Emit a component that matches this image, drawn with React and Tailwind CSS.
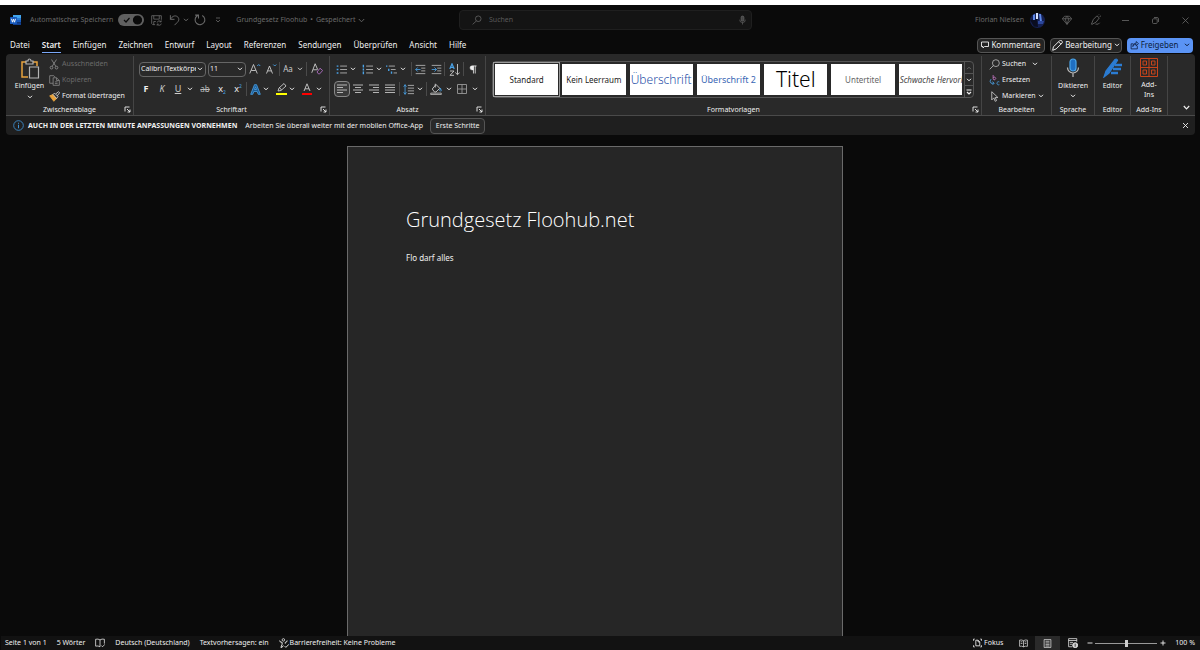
import React from 'react';
import clsx from 'clsx';

const Icon = ({ w = 12, h = 12, box = "0 0 16 16", className = "", children }) => (
    <svg width={w} height={h} viewBox={box} fill="none" stroke="currentColor" strokeWidth="1.2" className={clsx("shrink-0", className)} aria-hidden="true">
        {children}
    </svg>
);

const Chevron = ({ className = "" }) => (
    <Icon w={6} h={4} box="0 0 6 4" className={className}>
        <path d="M1 .8 3 2.8 5 .8" strokeWidth="1" />
    </Icon>
);

const Divider = () => <span className="h-3.5 w-px shrink-0 bg-[#4a4a4a]" />;

const ToolButton = ({ label, className = "w-4", children }) => (
    <button aria-label={label} title={label} className={clsx("flex h-4 shrink-0 items-center justify-center", className)}>
        {children}
    </button>
);

const MenuButton = ({ label, className = "w-2" }) => (
    <ToolButton label={label} className={className}>
        <Chevron />
    </ToolButton>
);

const Group = ({ title, className, launcher, children }) => (
    <section aria-label={title} className={clsx("relative flex h-full flex-col border-r border-[#454545]", className)}>
        <div className="min-h-0 flex-1">{children}</div>
        <div className="flex h-2.5 items-center justify-center">{title}</div>
        {launcher && (
            <button aria-label={`${title} Optionen`} className="absolute right-0.5 bottom-0.5">
                <Icon w={7} h={7} box="0 0 7 7">
                    <path d="M1 5.5V1h4.5M3 3l3 3M6 3.5V6H3.5" strokeWidth="0.9" />
                </Icon>
            </button>
        )}
    </section>
);

/* ---------- Title bar ---------- */

const WordLogo = () => (
    <svg width="12" height="12" viewBox="0 0 12 12" className="shrink-0" aria-hidden="true">
        <path d="M3 1h8v3H3z" fill="#41a5ee" />
        <path d="M3 4h8v2H3z" fill="#2b7cd3" />
        <path d="M3 6h8v2.5H3z" fill="#185abd" />
        <path d="M3 8.500h8V11H3z" fill="#103f91" />
        <rect x="0" y="3" width="7" height="7" rx=".6" fill="#185abd" />
        <path d="M1.500 4.800 2.500 8.200 3.500 5.200 4.500 8.200 5.500 4.800" fill="none" stroke="#fff" strokeWidth=".9" />
    </svg>
);

const TitleBar = () => (
    <header className="mb-px flex h-[30px] shrink-0 items-center justify-between pl-1.5 text-[#6a6a6a]">
        <div className="flex flex-1 items-center pl-[3px]">
            <WordLogo />
            <label className="ml-2 flex items-center gap-[5px]">
                Automatisches Speichern
                <span className="relative flex">
                    <input type="checkbox" role="switch" defaultChecked className="peer h-3 w-[26px] appearance-none rounded-full bg-[#606060]" />
                    <Icon w={26} h={12} box="0 0 26 12" className="pointer-events-none absolute inset-0 text-[#0a0a0a]">
                        <path d="M6 6l2 2 3.500-4" />
                        <circle cx="19.500" cy="6" r="4" fill="currentColor" />
                    </Icon>
                </span>
            </label>
            <ToolButton label="Speichern" className="ml-1 w-4">
                <Icon w={11} h={11}>
                    <path d="M6 14H2.500L1 12.500V1h14v6M4 1v5h8V1M4 14V9.500h3M9 11a3 3 0 0 1 5.500-1M15 12.500a3 3 0 0 1-5.500 1M14.800 7.800V10h-2.300M9 15.500v-2.200h2.300" />
                </Icon>
            </ToolButton>
            <ToolButton label="Rückgängig" className="ml-0.5 w-4">
                <Icon w={11} h={12}>
                    <path d="M2 1v6h6M2 7C5 2 9 1 12 3s3 6 0 8.500L8 15.500" strokeWidth="1.400" />
                </Icon>
            </ToolButton>
            <MenuButton label="Rückgängig-Liste" />
            <ToolButton label="Wiederholen" className="ml-0.5 w-4">
                <Icon w={12} h={12}>
                    <path d="M1.500 1.500H6V6M11 2a6.500 6.500 0 1 1-7.500 1L6 1.500" strokeWidth="1.400" />
                </Icon>
            </ToolButton>
            <ToolButton label="Symbolleiste anpassen" className="ml-0.5 w-4">
                <Icon w={6} h={6} box="0 0 6 6">
                    <path d="M1 1h4M1 3l2 2 2-2" strokeWidth=".8" />
                </Icon>
            </ToolButton>
            <button className="ml-2.5 flex items-center gap-[3px]">
                <span>Grundgesetz Floohub</span>
                <span>•</span>
                <span>Gespeichert</span>
                <Icon w={7} h={5} box="0 0 7 5"><path d="M.800 1l2.700 2.800L6.200 1" strokeWidth=".9" /></Icon>
            </button>
        </div>
        <label className="ml-2 flex h-5 w-[293px] items-center rounded-sm border border-[#1f1f1f] bg-[#141414] pl-3 pr-1">
            <Icon w={10} h={10}>
                <circle cx="10" cy="6" r="4.500" />
                <path d="M7 9.500 1 15" />
            </Icon>
            <input type="search" placeholder="Suchen" aria-label="Suchen" className="ml-[7px] flex-1 bg-transparent outline-none placeholder:text-[#5a5a5a]" />
            <Icon w={9} h={10}>
                <rect x="5.500" y="1" width="5" height="9" rx="2.500" fill="#444" />
                <path d="M3 7.500a5 5 0 0 0 10 0M8 12.500V16" />
            </Icon>
        </label>
        <div className="flex flex-1 items-center justify-end pr-[7px]">
            <span>Florian Nielsen</span>
            <svg width="15" height="15" viewBox="0 0 15 15" className="ml-1.5" aria-hidden="true">
                <circle cx="7.500" cy="7.500" r="7.500" fill="#152052" />
                <path d="M0 7 7 6l1 8-4-.5Z" fill="#0a0d20" />
                <path d="M3 2 5 1v6H3zM9 1h2l1 8h-2z" fill="#5b86e8" />
                <path d="M6 0h2v6H6z" fill="#d5e2ff" />
                <path d="M8 8h6l-1 3H8z" fill="#2c479c" />
            </svg>
            <ToolButton label="Premium" className="ml-3.5 w-4">
                <Icon w={10} h={10}>
                    <path d="M4 2h8l3.500 4L8 15 .500 6ZM.500 6h15M5 6l3 9 3-9M5 6l3-4 3 4" />
                </Icon>
            </ToolButton>
            <ToolButton label="Stift" className="ml-3 w-4">
                <Icon w={11} h={12}>
                    <path d="M2 14 5 7l5-5 3.500 3-4.500 6-6.500 3.500ZM8 14h4l2-2M12 1l1-1M14 3l2-1" />
                </Icon>
            </ToolButton>
            <ToolButton label="Minimieren" className="ml-3.5 w-4">
                <Icon w={7} h={7} box="0 0 7 7"><path d="M0 3.500h7" strokeWidth=".8" /></Icon>
            </ToolButton>
            <ToolButton label="Wiederherstellen" className="ml-3.5 w-4">
                <Icon w={7} h={7} box="0 0 7 7"><rect x=".5" y="1.800" width="4.700" height="4.700" rx="1" strokeWidth=".8" /><path d="M2 .5h3q1.500 0 1.500 1.500v3" strokeWidth=".8" /></Icon>
            </ToolButton>
            <ToolButton label="Schließen" className="ml-3.5 w-4">
                <Icon w={7} h={7} box="0 0 7 7"><path d="M.500.500l6 6M6.500.500l-6 6" strokeWidth=".8" /></Icon>
            </ToolButton>
        </div>
    </header>
);

/* ---------- Tabs ---------- */

const tabs = ["Datei", "Start", "Einfügen", "Zeichnen", "Entwurf", "Layout", "Referenzen", "Sendungen", "Überprüfen", "Ansicht", "Hilfe"];

const TabBar = () => (
    <nav className="flex h-[18px] shrink-0 items-center justify-between pl-[9px] pr-[7px] text-[8px]">
        <div className="flex gap-3">
            {tabs.map((tab) => (
                <button key={tab} className={clsx("h-[15px] border-b", tab === "Start" ? "border-[#7aa7f7] font-semibold" : "border-transparent")}>
                    {tab}
                </button>
            ))}
        </div>
        <div className="flex items-center gap-[5px]">
            <button className="flex h-[15px] w-[68px] items-center justify-center gap-0.5 rounded-sm border border-[#555] bg-[#242424]">
                <Icon w={8} h={8}><path d="M1 2h14v9H7l-3 3v-3H1Z" strokeWidth="1.800" /></Icon>
                Kommentare
            </button>
            <button className="flex h-[15px] w-[72px] items-center justify-center gap-0.5 rounded-sm border border-[#555] bg-[#242424]">
                <Icon w={11} h={11}><path d="M1 15l1-5 9-9q2-1 3 0t1 3l-9 9ZM10 3l3 3" strokeWidth="1.400" /></Icon>
                Bearbeitung
                <Chevron />
            </button>
            <button className="flex h-[15px] w-[66px] items-center justify-center gap-0.5 rounded-sm bg-[#5b94f5] text-[#0b1c3c]">
                <Icon w={9} h={9}><path d="M6 5H2v9h11V9M5 10c1-3 3-4 6-4V9l4-4.500L11 1v3C7 4 5 6 5 10Z" strokeWidth="1.400" /></Icon>
                Freigeben
                <Chevron className="ml-1" />
            </button>
        </div>
    </nav>
);

/* ---------- Ribbon ---------- */

const ClipboardGroup = () => (
    <Group title="Zwischenablage" className="w-[128px]" launcher>
        <div className="flex">
            <button className="flex w-[43px] flex-col items-center pl-1">
                <Icon w={20} h={21} box="0 0 20 21" className="mt-0.5">
                    <path d="M6 4H2v15h6M13 4h4v4" stroke="#e8a33d" strokeWidth="1.500" />
                    <path d="M6 6V3h2q0-2 1.500-2T11 3h2v3ZM9.500 9h9v11h-9Z" stroke="#b5b5b5" fill="#292929" />
                </Icon>
                <span className="mt-0.5">Einfügen</span>
                <Chevron className="mt-1" />
            </button>
            <div className="flex flex-col">
                <button disabled className="flex h-4 items-center gap-[3px] text-[#6b6b6b]">
                    <Icon w={10} h={11}><path d="M4 0l7 11M12 0 5 11" stroke="#999" /><circle cx="4" cy="13" r="2.200" stroke="#999" /><circle cx="12" cy="13" r="2.200" stroke="#999" /></Icon>
                    Ausschneiden
                </button>
                <button disabled className="flex h-4 items-center gap-0.5 text-[#6b6b6b]">
                    <Icon w={11} h={11}><path d="M6 12H1V1h6l2 2M6 4h5l4 4v7H6ZM11 4v4h4M8.500 10h4M8.500 12.500h4" stroke="#888" /></Icon>
                    Kopieren
                </button>
                <button className="flex h-4 items-center gap-0.5">
                    <Icon w={11} h={11}>
                        <path d="M1 7l5-2 5 6-4 4Z" fill="#e8a33d" stroke="#e8a33d" />
                        <path d="M6 5l2-2 5 5-2 3ZM10 4l4-3 1.500 1.500L12 7" stroke="#ddd" fill="#292929" />
                    </Icon>
                    Format übertragen
                </button>
            </div>
        </div>
    </Group>
);

const Combo = ({ label, value, className }) => (
    <span className={clsx("relative flex h-[15px] items-center rounded-sm border border-[#666]", className)}>
        <select aria-label={label} className="w-full appearance-none overflow-hidden bg-transparent pl-px pr-[9px] outline-none">
            <option>{value}</option>
        </select>
        <Chevron className="pointer-events-none absolute right-0.5" />
    </span>
);

const FontGroup = () => (
    <Group title="Schriftart" className="w-[196px]" launcher>
        <div className="flex h-[21px] items-center pl-[5px] pt-[5px]">
            <Combo label="Schriftart" value="Calibri (Textkörper)" className="w-[67px]" />
            <Combo label="Schriftgrad" value="11" className="ml-0.5 w-[38px]" />
            <ToolButton label="Schriftgrad vergrößern" className="ml-px w-4">
                <Icon w={12} h={12}><path d="M1 14 6 2l5 12M3 10h6" stroke="#ccc" /><path d="M11 4l2-2 2 2" stroke="#4aa3e8" /></Icon>
            </ToolButton>
            <ToolButton label="Schriftgrad verkleinern">
                <Icon w={12} h={12}><path d="M2 14 6 4l4 10M3.500 10.500h5" stroke="#ccc" /><path d="M11 2l2 2 2-2" stroke="#4aa3e8" /></Icon>
            </ToolButton>
            <Divider />
            <button className="flex w-[26px] items-center justify-center gap-1 text-[8px] text-[#ccc]">Aa<Chevron /></button>
            <Divider />
            <ToolButton label="Formatierung löschen" className="w-5">
                <Icon w={12} h={12}><path d="M1 13 5.500 1 9 9M3 9h5" stroke="#ccc" /><path d="M8 12l4-5 3.500 3-4 4.500H10Z" stroke="#b06fc4" /></Icon>
            </ToolButton>
        </div>
        <div className="mt-0.5 flex h-5 items-center pl-1">
            <ToolButton label="Fett"><b className="text-[9px]">F</b></ToolButton>
            <ToolButton label="Kursiv"><i className="text-[9px] text-[#ccc]">K</i></ToolButton>
            <ToolButton label="Unterstrichen"><span className="text-[9px] text-[#ccc] underline">U</span></ToolButton>
            <MenuButton label="Unterstreichungsart" />
            <ToolButton label="Durchgestrichen" className="ml-0.5 w-[18px]"><s className="text-[8px] text-[#bbb]">ab</s></ToolButton>
            <ToolButton label="Tiefgestellt">
                <span className="text-[9px]">x</span><span className="pt-1.5 text-[5px] text-[#4aa3e8]">2</span>
            </ToolButton>
            <ToolButton label="Hochgestellt">
                <span className="text-[9px]">x</span><span className="pb-1.5 text-[5px] text-[#4aa3e8]">2</span>
            </ToolButton>
            <Divider />
            <ToolButton label="Texteffekte">
                <Icon w={11} h={11}><path d="M1 15 6.500 1h3L15 15h-3l-1.500-4h-5L4 15ZM6.500 8h3L8 4Z" stroke="#4aa3e8" fill="#1c5c96" /></Icon>
            </ToolButton>
            <MenuButton label="Texteffekte-Liste" className="w-1.5" />
            <ToolButton label="Texthervorhebung" className="ml-1 w-4">
                <Icon w={11} h={12} box="0 0 11 12"><path d="M2 8l1-3 5-4.500L10 3 5 7.500ZM3.500 4.500l2 2.500" stroke="#ccc" strokeWidth=".9" /><path d="M0 10h11v2H0z" fill="#ffff00" stroke="none" /></Icon>
            </ToolButton>
            <MenuButton label="Hervorhebungsfarbe" className="w-1.5" />
            <ToolButton label="Schriftfarbe" className="ml-[3px] w-[18px]">
                <Icon w={10} h={12} box="0 0 10 12"><path d="M2 8 5 .800 8 8M3 5.800h4" stroke="#ccc" strokeWidth=".9" /><path d="M0 10h10v2H0z" fill="#ff0000" stroke="none" /></Icon>
            </ToolButton>
            <MenuButton label="Schriftfarbe-Liste" className="w-1.5" />
        </div>
    </Group>
);

const Bullets = ({ d }) => (
    <Icon w={11} h={11}>
        <path d={d} stroke="#4aa3e8" strokeWidth="2" />
        <path d="M6 3h10M6 8h10M6 13h10" stroke="#bbb" />
    </Icon>
);

const Align = ({ d }) => (
    <Icon w={10} h={10} box="0 0 10 10"><path d={d} stroke="#c4c4c4" strokeWidth=".9" /></Icon>
);

const ParagraphGroup = () => (
    <Group title="Absatz" className="w-[156px]" launcher>
        <div className="flex h-[21px] items-center pl-[3px] pt-[5px]">
            <ToolButton label="Aufzählungszeichen"><Bullets d="M1 3h2.500M1 8h2.500M1 13h2.500" /></ToolButton>
            <MenuButton label="Aufzählungsbibliothek" />
            <ToolButton label="Nummerierung" className="ml-0.5 w-4"><Bullets d="M2 1v4M2 6.500v3M2 11v4" /></ToolButton>
            <MenuButton label="Nummerierungsbibliothek" />
            <ToolButton label="Liste mit mehreren Ebenen" className="w-4">
                <Icon w={11} h={11}>
                    <path d="M0 3h2M4 7v3M8 11v3" stroke="#4aa3e8" strokeWidth="2" />
                    <path d="M4 3h9M7 8h7M11 13h5" stroke="#bbb" />
                </Icon>
            </ToolButton>
            <MenuButton label="Listenbibliothek" />
            <span className="w-1" />
            <Divider />
            <ToolButton label="Einzug verkleinern">
                <Icon w={11} h={11}><path d="M1 2h14M9 6h6M9 10h6M1 14h14" stroke="#bbb" /><path d="M8 8H1M4 5 1 8l3 3" stroke="#4aa3e8" /></Icon>
            </ToolButton>
            <ToolButton label="Einzug vergrößern">
                <Icon w={11} h={11}><path d="M1 2h14M9 6h6M9 10h6M1 14h14" stroke="#bbb" /><path d="M1 8h7M5 5l3 3-3 3" stroke="#4aa3e8" /></Icon>
            </ToolButton>
            <Divider />
            <ToolButton label="Sortieren" className="w-[18px]">
                <Icon w={11} h={13} box="0 0 11 13">
                    <path d="M.800 6 3 .800 5.200 6M1.500 4.300h3" stroke="#4aa3e8" />
                    <path d="M1 8h4l-4 4.300h4M8.500 1v10.500M6.300 9.500l2.200 2.200 2.200-2.200" stroke="#ccc" strokeWidth=".9" />
                </Icon>
            </ToolButton>
            <Divider />
            <ToolButton label="Alle anzeigen" className="w-[18px]">
                <Icon w={8} h={9} box="0 0 9 10"><path d="M5 9.500V1h3.500M7 9.500V1" strokeWidth=".9" /><path d="M5 .8H3.500a2.300 2.300 0 0 0 0 4.700H5Z" fill="currentColor" strokeWidth=".5" /></Icon>
            </ToolButton>
        </div>
        <div className="mt-0.5 flex h-5 items-center pl-1">
            <ToolButton label="Linksbündig" className="w-4 rounded-sm border border-[#888] bg-[#3a3a3a]"><Align d="M0 1h10M0 3.500h6M0 6h10M0 8.500h6" /></ToolButton>
            <ToolButton label="Zentriert"><Align d="M0 1h10M2 3.500h6M0 6h10M2 8.500h6" /></ToolButton>
            <ToolButton label="Rechtsbündig"><Align d="M0 1h10M4 3.500h6M0 6h10M4 8.500h6" /></ToolButton>
            <ToolButton label="Blocksatz"><Align d="M0 1h10M0 3.500h10M0 6h10M0 8.500h10" /></ToolButton>
            <span className="w-px" />
            <Divider />
            <ToolButton label="Zeilenabstand" className="w-4">
                <Icon w={11} h={11}><path d="M3 1v14M1 4l2-3 2 3M1 12l2 3 2-3" stroke="#4aa3e8" /><path d="M7 2h9M7 6h9M7 10h9M7 14h9" stroke="#bbb" /></Icon>
            </ToolButton>
            <MenuButton label="Abstandsoptionen" />
            <span className="w-0.5" />
            <Divider />
            <ToolButton label="Schattierung" className="w-[18px]">
                <Icon w={12} h={12}><path d="M3 8l5-6 5 5-5 5H6ZM7 1v5" stroke="#ccc" /><path d="M14 7q2 4 0 4t0-4" stroke="#4aa3e8" /><path d="M1 13.500h14v2H1Z" stroke="#bbb" /></Icon>
            </ToolButton>
            <MenuButton label="Schattierungsfarbe" />
            <ToolButton label="Rahmen" className="w-[18px]">
                <Icon w={10} h={10} box="0 0 10 10"><path d="M.500.500h9v9h-9ZM5 .500v9M.500 5h9" stroke="#999" strokeWidth=".9" /></Icon>
            </ToolButton>
            <MenuButton label="Rahmenlinien" />
        </div>
    </Group>
);

const styleCards = [
    { name: "Standard", look: "text-[8px] text-[#222]" },
    { name: "Kein Leerraum", look: "text-[8px] text-[#222]" },
    { name: "Überschrift", look: "text-[12px] font-light text-[#1f4fa8]" },
    { name: "Überschrift 2", look: "text-[9px] text-[#3a68b5]" },
    { name: "Titel", look: "text-[21px] font-light text-black" },
    { name: "Untertitel", look: "text-[8px] text-[#666]" },
    { name: "Schwache Hervorhebung", look: "text-[8px] italic text-[#444]" },
];

const StylesGroup = () => (
    <Group title="Formatvorlagen" className="min-w-0 flex-1" launcher>
        <div className="mt-[5px] mr-[7px] ml-[6px] flex h-[37px] rounded-sm border border-[#555]">
            <div className="grid flex-1 grid-cols-7 items-center">
                {styleCards.map(({ name, look }, i) => (
                    <button key={name} className={clsx("flex h-full min-w-0 border p-px", i === 0 ? "border-[#999]" : "border-transparent")}>
                        <span className={clsx("flex h-full w-full items-center overflow-hidden bg-white leading-none whitespace-nowrap", i === 6 ? "pl-px" : "justify-center", look)}>
                            {name}
                        </span>
                    </button>
                ))}
            </div>
            <div className="flex w-[9px] flex-col divide-y divide-[#555] border-l border-[#555]">
                <button aria-label="Nach oben" disabled className="flex flex-1 items-center justify-center text-[#666]"><Chevron className="rotate-180" /></button>
                <button aria-label="Nach unten" className="flex flex-1 items-center justify-center"><Chevron /></button>
                <button aria-label="Weitere" className="flex flex-1 items-center justify-center">
                    <Icon w={6} h={6} box="0 0 6 6"><path d="M.500 1h5M1 3l2 2 2-2" /></Icon>
                </button>
            </div>
        </div>
    </Group>
);

const EditGroup = () => (
    <Group title="Bearbeiten" className="w-[70px]">
        <div className="flex flex-col pl-[7px]">
            <button className="flex h-4 items-center gap-0.5">
                <Icon w={11} h={11}><circle cx="10" cy="6" r="5" stroke="#bbb" /><path d="M6.500 9.500 1 15" stroke="#bbb" /></Icon>
                Suchen
                <Chevron className="ml-1" />
            </button>
            <button className="flex h-4 items-center gap-0.5">
                <Icon w={11} h={11}>
                    <path d="M6 0v6M6 4a2 2 0 1 1 0 2" stroke="#c678c6" />
                    <path d="M3 6q-3 3 0 6h4M5 9.500l2.500 2.500L5 14.500M15 10a2.300 2.300 0 1 0 0 4" stroke="#4aa3e8" />
                </Icon>
                Ersetzen
            </button>
            <button className="flex h-4 items-center gap-0.5">
                <Icon w={11} h={11}><path d="M4 1v12l3-3 2 5 2-1-2-4.500h4Z" stroke="#ccc" /></Icon>
                Markieren
                <Chevron />
            </button>
        </div>
    </Group>
);

const Ribbon = () => (
    <div className="flex h-[62px] shrink-0 rounded-t border-b border-[#4a4a4a] bg-[#292929] pt-0.5">
        <ClipboardGroup />
        <FontGroup />
        <ParagraphGroup />
        <StylesGroup />
        <EditGroup />
        <Group title="Sprache" className="w-[43px]">
            <button className="flex w-full flex-col items-center">
                <Icon w={14} h={20} box="0 0 14 20" className="mt-0.5">
                    <rect x="4" y="1" width="6" height="12" rx="3" fill="#1f6fc2" stroke="#4aa3e8" />
                    <path d="M1.500 9.500a5.500 5.500 0 0 0 11 0M7 15v4" stroke="#bbb" />
                </Icon>
                <span className="mt-[3px]">Diktieren</span>
                <Chevron className="mt-[3px]" />
            </button>
        </Group>
        <Group title="Editor" className="w-[36px]">
            <button className="flex w-full flex-col items-center">
                <Icon w={20} h={20} box="0 0 20 20" className="mt-0.5">
                    <path d="M1 19l2-6L12 1.500q2-1 2.500 1L6 15Z" fill="#2b7cd3" stroke="#2b7cd3" />
                    <path d="M12 7h7M10 11h8M8 15h7" stroke="#2b7cd3" strokeWidth="2.500" />
                </Icon>
                <span className="mt-[3px]">Editor</span>
            </button>
        </Group>
        <Group title="Add-Ins" className="w-[37px]">
            <button className="flex w-full flex-col items-center">
                <Icon w={18} h={19} box="0 0 18 19" className="mt-0.5">
                    <path d="M.500.500h17v18H.500ZM9 .500v18M.500 9.500h17M3 3h3.500v4H3ZM11.500 3H15v4h-3.500ZM3 12h3.500v4H3ZM11.500 12H15v4h-3.500Z" stroke="#c8441b" strokeWidth="1" />
                </Icon>
                <span className="mt-[3px] leading-[10px]">Add-<br />Ins</span>
            </button>
        </Group>
        <button aria-label="Menüband reduzieren" className="flex w-[27px] items-end justify-end pr-[5px] pb-[5px]">
            <Icon w={7} h={5} box="0 0 7 5"><path d="M.800 1l2.700 2.800L6.200 1" /></Icon>
        </button>
    </div>
);

const MessageBar = () => (
    <div role="status" className="flex h-[19px] shrink-0 items-center rounded-b bg-[#1f1f1f] pl-[7px] pr-1.5">
        <Icon w={11} h={11} className="text-[#3f94d8]"><circle cx="8" cy="8" r="7" /><path d="M8 7v5M8 4v1.500" strokeWidth="1.500" /></Icon>
        <strong className="ml-1 font-bold">AUCH IN DER LETZTEN MINUTE ANPASSUNGEN VORNEHMEN</strong>
        <span className="ml-2">Arbeiten Sie überall weiter mit der mobilen Office-App</span>
        <button className="ml-[7px] h-4 w-[55px] rounded-sm border border-[#555] bg-[#292929]">Erste Schritte</button>
        <button aria-label="Meldung schließen" className="ml-auto">
            <Icon w={7} h={7} box="0 0 7 7"><path d="M1 1l5 5M6 1 1 6" strokeWidth=".9" /></Icon>
        </button>
    </div>
);

/* ---------- Document ---------- */

const Document = () => (
    <main className="flex min-h-0 flex-1 justify-center overflow-hidden pt-[11px] pr-[11px]">
        <article className="w-[496px] border border-b-0 border-[#6a6a6a] bg-[#262626] px-[58px] pt-[58px] text-[#f0f0f0]">
            <h1 className="font-['Open_Sans','Noto_Sans',sans-serif] text-[20px] leading-[30px] font-light text-white">Grundgesetz Floohub.net</h1>
            <p className="mt-[17px] text-[8px] leading-3">Flo darf alles</p>
        </article>
    </main>
);

/* ---------- Status bar ---------- */

const StatusBar = () => (
    <footer className="flex h-3.5 shrink-0 items-center justify-between bg-[#121212] pl-1 pr-[5px]">
        <div className="flex items-center gap-2.5">
            <button>Seite 1 von 1</button>
            <button>5 Wörter</button>
            <button aria-label="Rechtschreibprüfung">
                <Icon w={10} h={10}><path d="M8 3Q5 1 1 2v11q4-1 7 1M8 3q3-2 7-1v7M8 3v11M10 12l2 2 4-4" /></Icon>
            </button>
            <button>Deutsch (Deutschland)</button>
            <button>Textvorhersagen: ein</button>
            <button className="flex items-center gap-px">
                <Icon w={10} h={10}><circle cx="7" cy="3" r="2" /><path d="M1 4q0 3 4 3v3l-2 5q2 1 4-3M13 4q0 3-3 3v2M9 13l2 2 5-5" strokeWidth="1.500" /></Icon>
                Barrierefreiheit: Keine Probleme
            </button>
        </div>
        <div className="flex h-full items-center">
            <button className="flex items-center gap-0.5">
                <Icon w={9} h={10}><path d="M3 1H1v3M13 1h2v3M1 12v3h2M15 12v3h-2M5 3h4l3 3v7H5ZM9 3v3h3" strokeWidth="1.500" /></Icon>
                Fokus
            </button>
            <button aria-label="Lesemodus" className="ml-2 flex h-full w-6 items-center justify-center">
                <Icon w={9} h={9}><path d="M8 3Q5 1 1 2v11q4-1 7 1 3-2 7-1V2q-4-1-7 1v11M3 5h3M3 8h3M10 5h3M10 8h3" /></Icon>
            </button>
            <button aria-label="Seitenlayout" className="flex h-full w-[25px] items-center justify-center bg-[#2a2a2a]">
                <Icon w={9} h={9}><path d="M2 1h12v14H2ZM4.500 4h7M4.500 7h7M4.500 10h7M4.500 12.500h7" /></Icon>
            </button>
            <button aria-label="Weblayout" className="flex h-full w-[25px] items-center justify-center">
                <Icon w={10} h={10}><path d="M7 14H1V1h13v5M1 4h13M3 7h5M3 10h4" /><circle cx="11.500" cy="11.500" r="4" fill="#ccc" /><path d="M11.500 9v5" stroke="#222" /></Icon>
            </button>
            <button aria-label="Verkleinern" className="ml-0.5 w-2">
                <Icon w={6} h={6} box="0 0 6 6"><path d="M.500 3h5" strokeWidth=".9" /></Icon>
            </button>
            <input
                type="range"
                aria-label="Zoom"
                min="0"
                max="200"
                defaultValue="100"
                className="h-px w-[62px] appearance-none bg-[#999] [&::-webkit-slider-thumb]:h-[7px] [&::-webkit-slider-thumb]:w-[3px] [&::-webkit-slider-thumb]:appearance-none [&::-webkit-slider-thumb]:bg-[#ccc]"
            />
            <button aria-label="Vergrößern" className="ml-[3px] w-2">
                <Icon w={6} h={6} box="0 0 6 6"><path d="M.500 3h5M3 .500v5" strokeWidth=".9" /></Icon>
            </button>
            <button className="ml-[7px]">100 %</button>
        </div>
    </footer>
);

const App = () => (
    <div className="flex h-screen flex-col overflow-hidden border-t-[5px] border-white bg-[#0a0a0a] pl-px font-['Noto_Sans','Open_Sans',sans-serif] text-[7px] leading-[10px] text-[#f0f0f0]">
        <TitleBar />
        <TabBar />
        <div className="ml-[5px] mr-[5px] flex flex-col">
            <Ribbon />
            <MessageBar />
        </div>
        <Document />
        <StatusBar />
    </div>
);

export default App;
